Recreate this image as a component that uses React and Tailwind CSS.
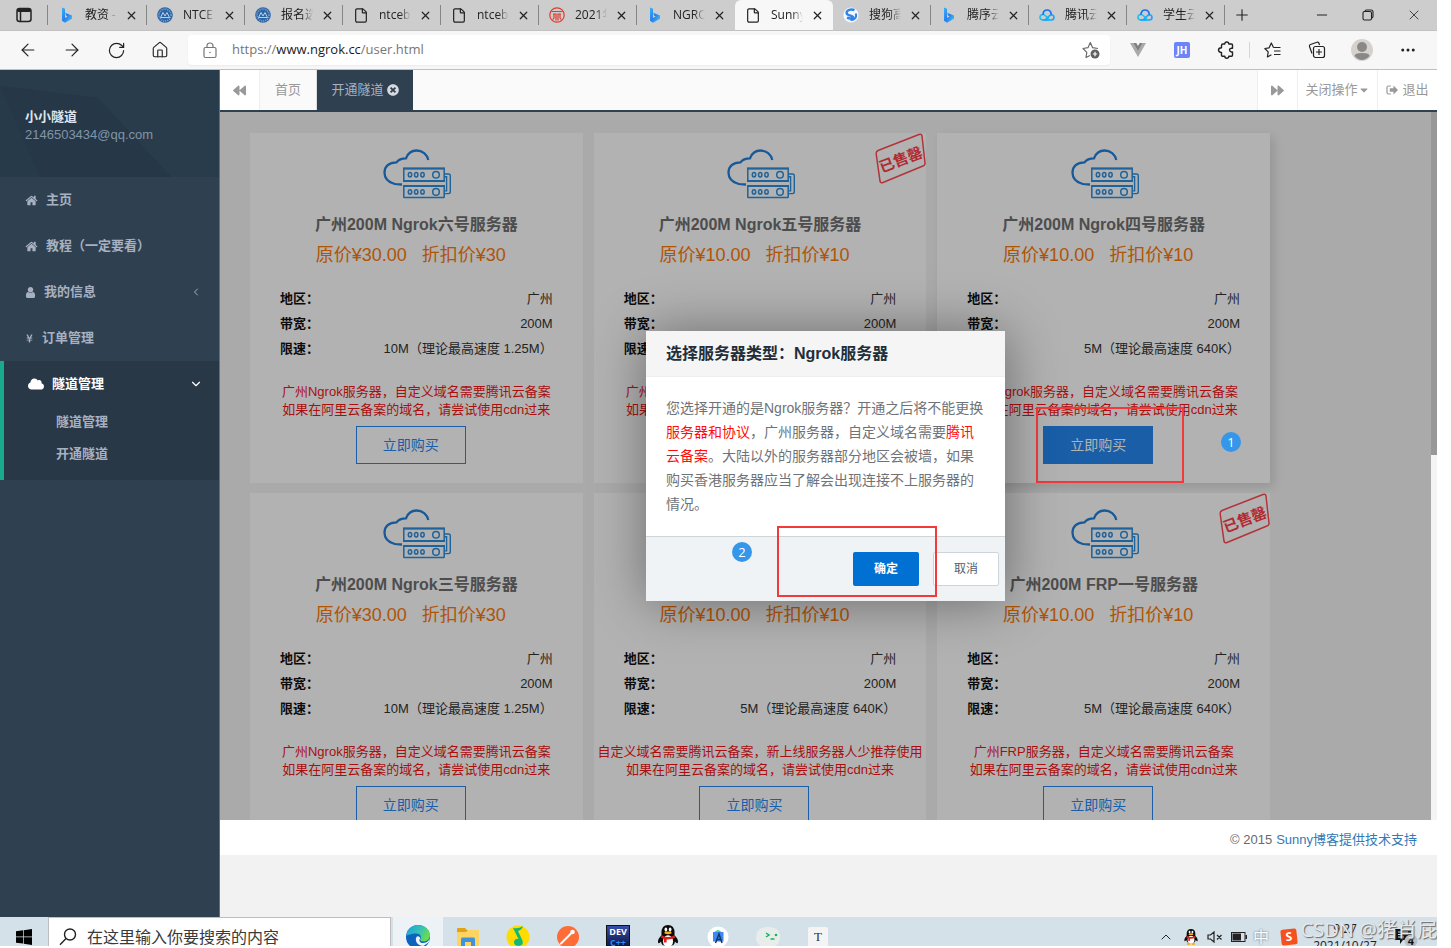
import { useState } from "react";
import clsx from "clsx";
import {
    ArrowLeft,
    ArrowRight,
    ChevronDown,
    ChevronLeft,
    ChevronUp,
    Ellipsis,
    File,
    House,
    Minus,
    Plus,
    RotateCw,
    X,
} from "lucide-react";
import {
    FaBackward,
    FaCaretDown,
    FaCloud,
    FaForward,
    FaTimesCircle,
    FaYenSign,
} from "react-icons/fa";

// -----------------------------
// DATA
// -----------------------------
const BROWSER_TABS = [
    { icon: "bing", title: "教资 - 国" },
    { icon: "ntce", title: "NTCE - 中" },
    { icon: "ntce", title: "报名选择" },
    { icon: "file", title: "ntcebm" },
    { icon: "file", title: "ntcebm" },
    { icon: "red", title: "2021年" },
    { icon: "bing", title: "NGROK" },
    { icon: "file", title: "Sunny-", active: true },
    { icon: "sogou", title: "搜狗高速" },
    { icon: "bing", title: "腾序云" },
    { icon: "tencent", title: "腾讯云" },
    { icon: "tencent", title: "学生云" },
];

const NGROK_NOTE = "广州Ngrok服务器，自定义域名需要腾讯云备案";

const SERVERS = [
    { id: 6, name: "广州200M Ngrok六号服务器", price: "30", speed: "10M（理论最高速度 1.25M）", note: NGROK_NOTE },
    { id: 5, name: "广州200M Ngrok五号服务器", price: "10", speed: "5M（理论最高速度 640K）", note: NGROK_NOTE, soldOut: true },
    { id: 4, name: "广州200M Ngrok四号服务器", price: "10", speed: "5M（理论最高速度 640K）", note: NGROK_NOTE, hot: true },
    { id: 3, name: "广州200M Ngrok三号服务器", price: "30", speed: "10M（理论最高速度 1.25M）", note: NGROK_NOTE },
    { id: 2, name: "广州200M Ngrok二号服务器", price: "10", speed: "5M（理论最高速度 640K）", note: "自定义域名需要腾讯云备案，新上线服务器人少推荐使用" },
    { id: 1, name: "广州200M FRP一号服务器", price: "10", speed: "5M（理论最高速度 640K）", note: "广州FRP服务器，自定义域名需要腾讯云备案", soldOut: true },
];

// -----------------------------
// ICONS
// -----------------------------
const BingIcon = () => (
    <svg viewBox="0 0 16 16" className="size-4">
        <defs>
            <linearGradient id="bing" x1="0" y1="0" x2="1" y2="1">
                <stop offset="0" stopColor="#35b5f5" />
                <stop offset="0.5" stopColor="#2a7df0" />
                <stop offset="1" stopColor="#3fd0f0" />
            </linearGradient>
        </defs>
        <path d="M3 .5l3 1.200v9.300l2.600-1.500-1.400-.7L6.200 5.800l6.800 2.600v3.400L6 15.800l-3-2z" fill="url(#bing)" />
    </svg>
);

const NtceIcon = () => (
    <svg viewBox="0 0 16 16" className="size-4">
        <circle cx="8" cy="8" r="7.8" fill="#2c64a4" />
        <circle cx="8" cy="8" r="6" fill="none" stroke="#7fa6d0" strokeWidth="1.600" strokeDasharray="1 1" />
        <path d="M3.500 10.500l2.500-5 2 3.500 2-3.500 2.500 5z" fill="#2c64a4" stroke="#b9d0e8" strokeWidth="1" />
    </svg>
);

const RedIcon = () => (
    <svg viewBox="0 0 16 16" className="size-4" fill="none" stroke="#e23b2e">
        <circle cx="8" cy="8" r="7.200" strokeWidth="1.200" />
        <path d="M2.500 4.500h11M4 7h3v6.500M12 7H9v6.500M5 7v3.500q0 1.500-1.500 2M11 7v3.500q0 1.500 1.500 2" strokeWidth="1.200" />
    </svg>
);

const SogouIcon = () => (
    <svg viewBox="0 0 16 16" className="size-4">
        <circle cx="8" cy="8" r="7.600" fill="#f3f8ff" />
        <path d="M11.500 3.200C8 1.500 3.600 3 3.600 6c0 3 6.600 2.200 6.600 4.300 0 1.500-3.400 1.700-6.200.3" fill="none" stroke="#2f83ea" strokeWidth="2.400" />
        <path d="M12.500 6.500c2 3-1 7-5 6.500" fill="none" stroke="#2f83ea" strokeWidth="2" />
    </svg>
);

const TencentIcon = () => (
    <svg viewBox="0 0 16 12" className="h-3 w-4" fill="none" strokeWidth="1.700" strokeLinecap="round" strokeLinejoin="round">
        <path d="M9 11H4C2 11 1 9.700 1 8.200 1 6.500 2.400 5.300 4.300 5.500 5.500 5.600 6.500 6.500 9.500 9.500" stroke="#19c3f0" />
        <path d="M4 11h8.200c1.700 0 2.800-1.300 2.800-2.700 0-2.300-2.500-3.200-4.300-1.800L6 11" stroke="#1fa5f5" />
        <path d="M4 5.200C4.200 2.800 6 1 8.200 1c2 0 3.600 1.400 4 3.900" stroke="#1671f2" />
    </svg>
);

const TabIcon = ({ name }) => {
    if (name === "bing") return <BingIcon />;
    if (name === "ntce") return <NtceIcon />;
    if (name === "red") return <RedIcon />;
    if (name === "sogou") return <SogouIcon />;
    if (name === "tencent") return <TencentIcon />;
    return <File className="size-[17px] text-[#222]" strokeWidth={1.8} />;
};

const HomeIcon = ({ className }) => (
    <svg viewBox="0 0 1792 1792" className={className} fill="currentColor">
        <path d="M1472 992v480q0 26-19 45t-45 19h-384v-384h-256v384h-384q-26 0-45-19t-19-45v-480q0-1 .5-3t.5-3l575-474 575 474q1 2 1 6zm223-69l-62 74q-8 9-21 11h-3q-13 0-21-7l-692-577-692 577q-12 8-24 7-13-2-21-11l-62-74q-8-10-7-23.500t11-21.500l719-599q32-26 76-26t76 26l244 204v-195q0-14 9-23t23-9h192q14 0 23 9t9 23v408l219 182q10 8 11 21.500t-7 23.500z" />
    </svg>
);

const UserIcon = ({ className }) => (
    <svg viewBox="128 128 1536 1536" className={className} fill="currentColor">
        <path d="M1536 1399q0 109-62.500 187t-150.500 78h-854q-88 0-150.500-78t-62.500-187q0-85 8.500-160.500t31.500-152 58.500-131 94-89 134.500-34.500q131 128 313 128t313-128q76 0 134.500 34.500t94 89 58.500 131 31.500 152 8.500 160.500zm-256-887q0 159-112.500 271.500t-271.500 112.500-271.500-112.500-112.500-271.500 112.500-271.500 271.500-112.500 271.500 112.500 112.500 271.500z" />
    </svg>
);

const ServerIcon = () => (
    <svg viewBox="0 0 70 50" className="h-[50px] w-[70px]" fill="none" stroke="#2e8fdf" strokeWidth="1.500">
        <path
            d="M19 35.500C15 35.500 13 35.500 10.500 34.500C4.500 32.500 1.500 28 1.500 23.500C1.500 17.500 6 13.300 13.500 13.300C15.500 10.500 19 9.300 23 9.300C25 4 29 1.500 33.500 1.500C39.500 1.500 44 5.500 45.300 11"
            stroke="#2380dd"
            strokeWidth="2.300"
        />
        <rect x="20.800" y="19.500" width="40.400" height="12.500" />
        <path d="M20 19.500h42M20 32h42" strokeWidth="2" />
        <rect x="20.800" y="37" width="40.400" height="11.500" rx="0.500" />
        <path d="M20 37h42" strokeWidth="2" />
        {[25.700, 42.900].map((cy) => (
            <g key={cy}>
                <ellipse cx="27" cy={cy} rx="1.700" ry="2.200" />
                <ellipse cx="33.200" cy={cy} rx="1.700" ry="2.200" />
                <ellipse cx="39.500" cy={cy} rx="1.700" ry="2.200" />
                <circle cx="53" cy={cy} r="3.300" />
            </g>
        ))}
        <path d="M61 25h4.500q1.800 0 1.800 1.800v16q0 1.800-1.800 1.800H61M61 27.700h2.600v14.200H61" strokeWidth="1.400" />
    </svg>
);

const SoldOutStamp = () => (
    <svg viewBox="0 0 51 51" className="absolute top-0 right-0 size-[51px]" role="img" aria-label="已售罄">
        <path
            d="M3 17.500L44 1.500q2.500-1 3 1.500L50 30q.3 2-1.500 2.800L8 49.500q-2.500.8-3-1.500L1.200 21q-.3-2.500 1.800-3.500z"
            fill="none"
            stroke="#ff4a52"
            strokeWidth="1.500"
        />
        <text
            x="25.500"
            y="32"
            textAnchor="middle"
            transform="rotate(-21 25.5 26)"
            fill="#ff3d47"
            className="font-['Noto_Sans_CJK_SC',sans-serif] text-[15px] font-bold"
        >
            已售罄
        </text>
    </svg>
);

const SignOutIcon = () => (
    <svg viewBox="0 0 12 10" className="h-[10px] w-3" fill="none">
        <path d="M4.500 1H2.500Q1 1 1 2.500v5Q1 9 2.500 9h2" stroke="currentColor" strokeWidth="1.200" strokeLinecap="round" />
        <path d="M7.500 .5L12 5 7.500 9.500V6.800H3.800V3.200h3.700z" fill="currentColor" />
    </svg>
);

const LockIcon = () => (
    <svg viewBox="0 0 14 17" className="h-[17px] w-[14px]" fill="none" stroke="#777" strokeWidth="1.200">
        <rect x="1" y="5.500" width="12" height="10" rx="1.500" />
        <path d="M4 5.500V4q0-3 3-3t3 3v1.500" />
        <circle cx="7" cy="10.500" r="0.800" fill="#777" stroke="none" />
    </svg>
);

const PuzzleIcon = () => (
    <svg viewBox="0 0 18 18" className="size-[18px]" fill="none" stroke="#222" strokeWidth="1.400" strokeLinejoin="round">
        <path d="M6 3h1.800q0-2 2-2t2 2H14.500q1 0 1 1v3.200h-1q-2 .2-2 1.900t2 1.900h1v3.200q0 1-1 1h-2.700q0 2-2 2t-2-2H5.500q-1 0-1-1V11.500q-3 0-3-2.400t3-2.400V4.500Q4.500 3 6 3z" />
    </svg>
);

const VueIcon = () => (
    <svg viewBox="0 0 16 14" className="h-[14px] w-4">
        <path d="M0 0h3.300L8 8.300 12.700 0H16L8 14z" fill="#a9a9a9" />
        <path d="M3.300 0h3L8 3l1.700-3h3L8 8.300z" fill="#7f7f7f" />
    </svg>
);

const FavoriteAddIcon = () => (
    <svg viewBox="0 0 18 18" className="size-[18px]" fill="none" stroke="#6b6b6b" strokeWidth="1.200" strokeLinejoin="round">
        <path d="M8 14.500l-4 2 .8-5.200L1 7.500l5-.8L8.300 1.500l2.300 5.200 5.400.8" />
        <circle cx="13" cy="13" r="4.500" fill="#5f5f5f" stroke="none" />
        <path d="M13 10.800v4.400M10.800 13h4.400" stroke="#fff" />
    </svg>
);

const FavoritesIcon = () => (
    <svg viewBox="0 0 18 18" className="size-[18px]" fill="none" stroke="#222" strokeWidth="1.200" strokeLinejoin="round">
        <path d="M9.500 6.500L7.300 2 5.100 6.800.8 7.500l3.400 3.400L3.400 16l4-2.200M9.500 6.500h7M10 10h6.500M10 13.500h6.500" />
    </svg>
);

const CollectionsIcon = () => (
    <svg viewBox="0 0 18 18" className="size-[18px]" fill="none" stroke="#222" strokeWidth="1.200">
        <path d="M4 12.500L1.500 5.500Q1 4 2.500 3.500L9 1.300q1.500-.5 2 1L11.500 4" />
        <rect x="5.500" y="5.500" width="11" height="11" rx="2" />
        <path d="M11 8v6M8 11h6" />
    </svg>
);

const WindowsIcon = () => (
    <svg viewBox="0 0 16 16" className="size-4" fill="#000">
        <path d="M0 2.300L7 1.300V7.600H0zM7.700 1.200L16 0v7.600H7.700zM0 8.300h7v6.300L0 13.700zM7.700 8.300H16V16l-8.300-1.200z" />
    </svg>
);

const SearchIcon = () => (
    <svg viewBox="0 0 18 18" className="size-[18px]" fill="none" stroke="#222" strokeWidth="1.400">
        <circle cx="11" cy="6.500" r="5.500" />
        <path d="M7 10.500L1 16.800" />
    </svg>
);

const EdgeIcon = () => (
    <svg viewBox="0 0 24 24" className="size-6">
        <defs>
            <linearGradient id="edge" x1="0" y1="0" x2="1" y2="0.400">
                <stop offset="0" stopColor="#1a9fdb" />
                <stop offset="0.600" stopColor="#35c1b8" />
                <stop offset="1" stopColor="#66dc50" />
            </linearGradient>
        </defs>
        <circle cx="12" cy="12" r="12" fill="#0d62bd" />
        <path d="M.2 11C1 4.500 6 0 12 0c7 0 12 5 12 10 0 4-3 6.500-6.500 6.500-3 0-4-1.500-3-3 1.200-2-.5-5-4-5C6 8.500 1.500 10 .2 11z" fill="url(#edge)" />
        <path d="M10.500 12c-2 3 .5 9 7 9l5-3.500L24 14l-3 3c-5 2.500-9 0-7-3.500.8-1.500-2.500-3.500-3.500-1.500z" fill="#edf2f6" />
    </svg>
);

const FolderIcon = () => (
    <svg viewBox="0 0 22 20" className="h-5 w-[22px]">
        <path d="M0 2q0-1 1-1h7l2 2h11q1 0 1 1v15H0z" fill="#e0a316" />
        <path d="M0 5h9l2-2h11v16H0z" fill="#fdd462" />
        <path d="M4 19v-7q0-1.500 1.500-1.500h11q1.500 0 1.500 1.500v7h-4v-4H8v4z" fill="#3f93dc" />
    </svg>
);

const MusicIcon = () => (
    <svg viewBox="0 0 24 24" className="size-6">
        <circle cx="12" cy="12" r="11.500" fill="#ffdc00" />
        <path d="M7 3q6 1 10-2-1 4-5 5l4.500 9.500q1.500 5-4 5.500-5-.5-4.500-4.500 1-3.500 4.500-2.500z" fill="#12b877" />
    </svg>
);

const PostmanIcon = () => (
    <svg viewBox="0 0 24 24" className="size-6">
        <circle cx="12" cy="12" r="11" fill="#ff6c37" />
        <path d="M5 18.500l6-6M10 13.500l5-5" stroke="#fff" strokeWidth="2" strokeLinecap="round" />
        <circle cx="16.500" cy="7" r="2.300" fill="#fff" />
    </svg>
);

const QqIcon = ({ className }) => (
    <svg viewBox="0 0 22 26" className={className}>
        <path d="M4 11Q3 0 11 0t7 11q5 5 3.500 8.500-1 1-3-1.500 0 5-7.500 5t-7.500-5q-2 2.500-3 1.500Q-1 16 4 11z" fill="#0b0b0b" />
        <ellipse cx="11" cy="17.500" rx="5.500" ry="6.500" fill="#fff" />
        <ellipse cx="8.700" cy="5" rx="1.500" ry="2.200" fill="#fff" />
        <ellipse cx="13.300" cy="5" rx="1.500" ry="2.200" fill="#fff" />
        <ellipse cx="11" cy="8.500" rx="4" ry="1.400" fill="#f9b016" />
        <path d="M4 11q7 4 14 0l.8 2.800Q14 16 9.500 15.700V19H6.500v-4l-3-1.200z" fill="#e51c1c" />
        <path d="M4 24q3-3 6.500 0 0 2-3.500 2t-3-2zM11.500 24q3.500-3 6.500 0 0 2-3 2t-3.500-2z" fill="#f9b016" />
    </svg>
);

const AndroidStudioIcon = () => (
    <svg viewBox="0 0 22 22" className="size-[22px]">
        <circle cx="11" cy="11" r="10.500" fill="#fff" />
        <path d="M7 6.500q4-5 8 0z" fill="#3ddc84" />
        <rect x="6" y="6" width="10.500" height="9.500" fill="#4086f5" />
        <path d="M8.500 17L12 8l3 9M10 13.500h4" fill="none" stroke="#12395f" strokeWidth="1.500" />
    </svg>
);

const TerminalIcon = () => (
    <svg viewBox="0 0 26 22" className="h-[22px] w-[26px]">
        <path d="M1 12Q1 1 13 1t12 10q0 10-12 10Q1 21 1 12z" fill="#e8eceb" />
        <path d="M11 7l3 2-3 2M15.500 13h4" fill="none" stroke="#17b45f" strokeWidth="1.500" />
        <circle cx="21" cy="9" r="1.300" fill="#17b45f" />
    </svg>
);

const VolumeMutedIcon = () => (
    <svg viewBox="0 0 16 12" className="h-3 w-4" fill="none" stroke="#222" strokeWidth="1.200">
        <path d="M1 4h2.500L7 1v10L3.500 8H1zM10 4l4.500 4.500M14.500 4L10 8.500" />
    </svg>
);

const BatteryIcon = () => (
    <svg viewBox="0 0 16 10" className="h-[10px] w-4">
        <rect x="0.500" y="0.500" width="13.500" height="9" fill="none" stroke="#222" />
        <rect x="1.500" y="1.500" width="8.500" height="7" fill="#222" />
        <path d="M14.500 3H16v4h-1.500z" fill="#222" />
    </svg>
);

const NoticeIcon = () => (
    <svg viewBox="0 0 24 18" className="h-[18px] w-6">
        <path d="M0 1h16v11H8l-3 4v-4H0z" fill="#111" />
        <path d="M3 4h10M3 6.500h10M3 9h6" stroke="#d5e1e8" />
        <circle cx="16" cy="13" r="6.500" fill="#b9bfc3" />
    </svg>
);

// -----------------------------
// BROWSER CHROME
// -----------------------------
const BrowserTab = ({ tab, divided }) => (
    <div
        className={clsx(
            "flex h-full w-[98px] shrink-0 items-center pl-[10px]",
            tab.active && "rounded-t-md bg-[#f7f7f7]"
        )}
    >
        <span className="flex w-4 justify-center">
            <TabIcon name={tab.icon} />
        </span>
        <span className="ml-[10px] w-8 overflow-hidden text-xs whitespace-nowrap text-[#222] [mask-image:linear-gradient(to_right,black_65%,transparent)]">
            {tab.title}
        </span>
        <button aria-label="关闭标签页" className="ml-[6px] flex w-4 justify-center">
            <X className="size-[13px] text-[#222]" strokeWidth={2.2} />
        </button>
        {divided && <span className="ml-auto h-5 w-px bg-[#858585]" />}
    </div>
);

const TabStrip = () => (
    <div className="flex h-[31px] shrink-0 items-center border-b border-[#c2c2c2] bg-[#cdcdcd]">
        <div className="flex h-full w-12 shrink-0 items-center">
            <svg viewBox="0 0 16 16" className="ml-4 size-4" fill="none" stroke="#222" strokeWidth="1.500">
                <rect x="1" y="1.500" width="14" height="13" rx="2.500" />
                <path d="M1.500 3.500h13" strokeWidth="3" />
                <path d="M4.500 5v9" />
            </svg>
            <span className="ml-auto h-5 w-px bg-[#858585]" />
        </div>
        <div className="ml-px flex h-full items-center">
            {BROWSER_TABS.map((tab, i) => (
                <BrowserTab key={i} tab={tab} divided={!tab.active && !BROWSER_TABS[i + 1]?.active} />
            ))}
        </div>
        <button aria-label="新建标签页" className="ml-2">
            <Plus className="size-[18px] text-[#222]" strokeWidth={1.5} />
        </button>
        <div className="ml-auto flex items-center text-[#222]">
            <button aria-label="最小化" className="flex w-[46px] justify-center">
                <Minus className="size-4" strokeWidth={1.5} />
            </button>
            <button aria-label="还原" className="flex w-[46px] justify-center">
                <svg viewBox="0 0 12 12" className="size-3" fill="none" stroke="#222" strokeWidth="1.100">
                    <rect x="1" y="2.500" width="8.500" height="8.500" rx="1.500" />
                    <path d="M3 2.500Q3 1 4.500 1h4.500q2 0 2 2v4.500q0 1.500-1.500 1.500" />
                </svg>
            </button>
            <button aria-label="关闭" className="flex w-[46px] justify-center">
                <X className="size-4" strokeWidth={1.2} />
            </button>
        </div>
    </div>
);

const Toolbar = () => (
    <div className="flex h-[39px] shrink-0 items-center border-b border-[#bfbfbf] bg-[#f7f7f7] px-[6px] text-[#222]">
        <button aria-label="后退" className="flex w-11 justify-center">
            <ArrowLeft className="size-5" strokeWidth={1.4} />
        </button>
        <button aria-label="前进" className="flex w-11 justify-center">
            <ArrowRight className="size-5" strokeWidth={1.4} />
        </button>
        <button aria-label="刷新" className="flex w-11 justify-center">
            <RotateCw className="size-[19px]" strokeWidth={1.5} />
        </button>
        <button aria-label="主页" className="flex w-11 justify-center">
            <House className="size-[18px]" strokeWidth={1.5} />
        </button>
        <div className="mx-[6px] flex h-[30px] flex-1 items-center rounded bg-white px-[10px] shadow-xs">
            <span className="flex w-6 justify-center">
                <LockIcon />
            </span>
            <a href="https://www.ngrok.cc/user.html" className="ml-[10px] flex-1 text-[13px] text-[#767676]">
                https://<span className="text-[#1b1b1b]">www.ngrok.cc</span>/user.html
            </a>
            <button aria-label="添加到收藏夹">
                <FavoriteAddIcon />
            </button>
        </div>
        <button aria-label="Vue" className="flex w-11 justify-center">
            <VueIcon />
        </button>
        <button aria-label="JSON-handle" className="flex w-11 justify-center">
            <span className="flex size-4 items-center justify-center rounded-xs bg-[#6b84f8] text-[10px] leading-none font-bold text-white">JH</span>
        </button>
        <button aria-label="扩展" className="flex w-11 justify-center">
            <PuzzleIcon />
        </button>
        <span className="mx-px h-4 w-px bg-[#d5d5d5]" />
        <button aria-label="收藏夹" className="flex w-11 justify-center">
            <FavoritesIcon />
        </button>
        <button aria-label="集锦" className="flex w-11 justify-center">
            <CollectionsIcon />
        </button>
        <button aria-label="个人资料" className="flex w-[46px] justify-center">
            <svg viewBox="0 0 22 22" className="size-[22px]">
                <circle cx="11" cy="11" r="11" fill="#d5d2ce" />
                <circle cx="11" cy="8" r="5" fill="#8a8886" />
                <path d="M3.500 17q0-3 7.500-3t7.500 3Q15 21 11 21t-7.500-4z" fill="#8a8886" />
            </svg>
        </button>
        <button aria-label="设置及其他" className="flex w-[46px] justify-center">
            <Ellipsis className="size-[18px]" />
        </button>
    </div>
);

// -----------------------------
// SIDEBAR
// -----------------------------
const NavItem = ({ icon, label, arrow }) => (
    <a href="#" className="flex h-[46px] items-center px-[25px] text-[13px] font-bold text-[#a7b1c2]">
        {icon}
        <span>{label}</span>
        {arrow}
    </a>
);

const Sidebar = () => (
    <aside className="w-[220px] shrink-0 border-r border-[#5f6f7d] bg-[#2f4050]">
        <div className="relative h-[107px] overflow-hidden bg-[#273a49]">
            <svg viewBox="0 0 219 107" preserveAspectRatio="none" className="absolute inset-0 size-full">
                <path d="M0 0h120L98 28 0 16z" fill="#293c4b" />
                <path d="M98 28L120 0h99v107h-48z" fill="#293c4b" />
                <path d="M98 28l73 79H40L0 16z" fill="#263847" />
            </svg>
            <div className="relative px-[25px] pt-[38px] text-[13px] leading-[18px]">
                <p className="font-bold text-[#dfe4ed]">小小隧道</p>
                <p className="text-[#8095a8]">2146503434@qq.com</p>
            </div>
        </div>
        <nav>
            <NavItem icon={<HomeIcon className="mr-2 size-[13px]" />} label="主页" />
            <NavItem icon={<HomeIcon className="mr-2 size-[13px]" />} label="教程（一定要看）" />
            <NavItem
                icon={<UserIcon className="mr-2 size-[11px]" />}
                label="我的信息"
                arrow={<ChevronLeft className="-mr-2 ml-auto size-3" />}
            />
            <NavItem icon={<FaYenSign className="mr-2 size-[9px]" />} label="订单管理" />
            <div className="border-l-4 border-[#19aa8d] bg-[#293846] pb-[10px]">
                <a href="#" className="flex h-[45px] items-center px-6 text-[13px] font-bold text-white">
                    <FaCloud className="mr-2 size-4" />
                    <span>隧道管理</span>
                    <ChevronDown className="-mr-2 ml-auto size-[14px]" />
                </a>
                <a href="#" className="flex h-8 items-center pl-[52px] text-[13px] font-bold text-[#a7b1c2]">隧道管理</a>
                <a href="#" className="flex h-8 items-center pl-[52px] text-[13px] font-bold text-[#a7b1c2]">开通隧道</a>
            </div>
        </nav>
    </aside>
);

// -----------------------------
// CONTENT
// -----------------------------
const ContentTabs = () => (
    <div className="flex h-[42px] shrink-0 items-stretch border-b-2 border-[#2f4050] bg-[#fafafa] text-[13px] text-[#999]">
        <button aria-label="向左滚动" className="flex w-10 items-center justify-center border-r border-[#eee] bg-white">
            <FaBackward className="size-[13px]" />
        </button>
        <a href="#" className="flex w-[57px] items-center justify-center border-r border-[#ddd]">首页</a>
        <a href="#" className="flex w-24 items-center justify-center gap-[3px] bg-[#2f4050] text-[#a7b1c2]">
            开通隧道
            <FaTimesCircle className="size-3 text-[#d5dae0]" />
        </a>
        <button aria-label="向右滚动" className="ml-auto flex w-10 items-center justify-center border-l border-[#eee] bg-white">
            <FaForward className="size-[13px]" />
        </button>
        <button className="flex w-20 items-center justify-center border-l border-[#eee] bg-white">
            关闭操作
            <FaCaretDown className="size-3" />
        </button>
        <a href="#" className="flex w-[60px] items-center justify-center gap-1 border-l border-[#eee] bg-white">
            <SignOutIcon />
            退出
        </a>
    </div>
);

const SpecRow = ({ label, value }) => (
    <div className="flex h-[25px] items-center justify-between text-[13px] text-[#333]">
        <dt className="font-bold text-[#111]">{label}：</dt>
        <dd>{value}</dd>
    </div>
);

const ServerCard = ({ server, onBuy }) => (
    <div
        className={clsx(
            "relative h-[350px] bg-white pt-4 text-center",
            server.hot && "shadow-[4px_4px_10px_rgba(0,0,0,0.12)]"
        )}
    >
        {server.soldOut && <SoldOutStamp />}
        <div className="flex justify-center pl-1">
            <ServerIcon />
        </div>
        <h3 className="mt-[14px] text-base leading-6 font-bold text-[#6f6f6f]">{server.name}</h3>
        <p className="mt-1 pr-[11px] text-lg leading-7 whitespace-pre text-[#fb7a0a]">
            {`原价¥${server.price}.00   折扣价¥${server.price}`}
        </p>
        <dl className="mt-[17px] px-[30px]">
            <SpecRow label="地区" value="广州" />
            <SpecRow label="带宽" value="200M" />
            <SpecRow label="限速" value={server.speed} />
        </dl>
        <p className="mt-[22px] text-[13px] leading-[18px] whitespace-nowrap text-[#f21616]">
            {server.note}
            <br />
            如果在阿里云备案的域名，请尝试使用cdn过来
        </p>
        <div className="mt-[7px] pr-[11px]">
            <button
                onClick={onBuy}
                className={clsx(
                    "h-[38px] w-[110px] border border-[#2587f0] text-sm",
                    server.hot ? "bg-[#2587f0] text-white" : "text-[#2587f0]"
                )}
            >
                立即购买
            </button>
        </div>
    </div>
);

const StepBadge = ({ n, className }) => (
    <span
        className={clsx(
            "absolute flex size-5 items-center justify-center rounded-full bg-[#3596ea] font-['Open_Sans',sans-serif] text-[13px] leading-none text-white",
            className
        )}
    >
        {n}
    </span>
);

const ConfirmDialog = ({ onClose }) => (
    <div
        role="dialog"
        aria-labelledby="dialog-title"
        className="relative w-[359px] bg-white shadow-[1px_1px_50px_rgba(0,0,0,0.4)]"
    >
        <h2 id="dialog-title" className="h-[46px] border-b border-[#eee] bg-[#f5f5f5] px-5 text-base leading-[46px] font-bold text-[#232e38]">
            选择服务器类型：Ngrok服务器
        </h2>
        <p className="px-5 pt-[19px] pb-5 text-sm leading-6 text-[#6f7377]">
            您选择开通的是Ngrok服务器？开通之后将不能更换
            <span className="text-[#ff0d0d]">服务器和协议</span>
            ，广州服务器，自定义域名需要
            <span className="text-[#ff0d0d]">腾讯云备案</span>
            。大陆以外的服务器部分地区会被墙，如果购买香港服务器应当了解会出现连接不上服务器的情况。
        </p>
        <div className="flex justify-end gap-[14px] border-t border-[#cfd4d6] bg-[#eff3f6] pt-[15px] pr-[6px] pb-[15px] text-xs">
            <button onClick={onClose} className="h-[34px] w-[66px] rounded-xs bg-[#0070d2] font-bold text-white">
                确定
            </button>
            <button onClick={onClose} className="h-[34px] w-[66px] rounded-xs border border-[#ced4dc] bg-white text-[#54606c]">
                取消
            </button>
        </div>
        <span className="absolute top-[195px] left-[131px] h-[71px] w-[160px] border-2 border-[#f23a3a]" />
        <StepBadge n={2} className="top-[211px] left-[86px]" />
    </div>
);

const ServerList = () => {
    const [open, setOpen] = useState(true);

    return (
        <div className="flex min-h-0 flex-1 bg-[#f4f4f4]">
            <div className="relative min-w-0 flex-1 overflow-hidden bg-[#f4f4f4] pt-[21px] pl-[30px]">
                <div className="grid max-w-[1020px] grid-cols-3 gap-x-[11px] gap-y-[10px]">
                    {SERVERS.map((s) => (
                        <ServerCard key={s.id} server={s} onBuy={() => setOpen(true)} />
                    ))}
                </div>
                {open && (
                    <div className="absolute inset-0 flex items-center justify-center bg-black/30">
                        <span className="absolute top-[295px] left-[816px] h-[76px] w-[148px] border-2 border-[#f23a3a]" />
                        <StepBadge n={1} className="top-80 left-[1001px]" />
                        <ConfirmDialog onClose={() => setOpen(false)} />
                    </div>
                )}
            </div>
            <div className="w-[6px] shrink-0">
                <div className="h-[343px] bg-[#989898]" />
            </div>
        </div>
    );
};

// -----------------------------
// TASKBAR
// -----------------------------
const TaskbarApp = ({ label, active, children }) => (
    <button
        aria-label={label}
        className={clsx("flex h-full w-[50px] items-center justify-center", active && "bg-[#edf2f6]")}
    >
        {children}
    </button>
);

const Taskbar = () => (
    <footer className="relative h-[29px] shrink-0 overflow-hidden bg-[#d5e1e8] font-['Open_Sans','Noto_Sans_CJK_SC',sans-serif]">
        <div className="flex h-10 items-center">
            <button aria-label="开始" className="flex w-12 shrink-0 justify-center">
                <WindowsIcon />
            </button>
            <label className="flex h-full w-[343px] shrink-0 items-center border border-[#bdbdbd] bg-white pl-[10px]">
                <SearchIcon />
                <input
                    aria-label="搜索"
                    placeholder="在这里输入你要搜索的内容"
                    className="ml-[10px] w-[280px] text-base outline-none placeholder:text-[#3a3a3a]"
                />
            </label>
            <div className="ml-[2px] flex h-full">
                <TaskbarApp label="Edge" active><EdgeIcon /></TaskbarApp>
                <TaskbarApp label="文件资源管理器"><FolderIcon /></TaskbarApp>
                <TaskbarApp label="QQ音乐"><MusicIcon /></TaskbarApp>
                <TaskbarApp label="Postman"><PostmanIcon /></TaskbarApp>
                <TaskbarApp label="Dev-C++">
                    <span className="flex size-6 flex-col items-center border border-[#111] bg-linear-to-b from-[#3a4ea8] to-[#0c1240] text-[9px] leading-[11px] font-bold text-white">
                        DEV
                        <span className="text-[#2d8df0]">C++</span>
                    </span>
                </TaskbarApp>
                <TaskbarApp label="QQ"><QqIcon className="h-6 w-[22px]" /></TaskbarApp>
                <TaskbarApp label="Android Studio"><AndroidStudioIcon /></TaskbarApp>
                <TaskbarApp label="FinalShell"><TerminalIcon /></TaskbarApp>
                <TaskbarApp label="Typora">
                    <span className="flex size-5 items-center justify-center rounded-xs bg-[#f4f4f4] font-['Liberation_Serif',serif] text-[13px] text-[#333]">T</span>
                </TaskbarApp>
            </div>
            <div className="ml-auto flex h-full items-center text-[#222]">
                <ChevronUp className="size-4" strokeWidth={1.5} />
                <QqIcon className="ml-[10px] h-4 w-[14px]" />
                <span className="ml-[9px]"><VolumeMutedIcon /></span>
                <span className="ml-2"><BatteryIcon /></span>
                <span className="ml-[6px] text-base text-white [text-shadow:0_0_2px_#555]">中</span>
                <span className="ml-3 flex size-4 -rotate-6 items-center justify-center rounded-xs bg-[#f4511e] text-xs font-bold text-white">S</span>
                <div className="ml-3 w-[72px] text-center text-xs leading-[17px]">
                    <p>9:27</p>
                    <p>2021/10/27</p>
                </div>
                <span className="relative mr-[18px] ml-[14px]">
                    <NoticeIcon />
                    <span className="absolute right-0 bottom-0 w-4 text-center text-[11px] leading-[10px] font-bold text-[#111]">4</span>
                </span>
            </div>
        </div>
        <span className="absolute top-0 right-0 text-[20px] leading-[26px] whitespace-nowrap text-[#e4e9ec] [text-shadow:1px_1px_1px_#666]">
            CSDN @猪肖屁
        </span>
    </footer>
);

const App = () => {
    return (
        <div className="flex h-screen flex-col overflow-hidden bg-white pr-[14px] pb-[2px] font-['Liberation_Sans','Noto_Sans_CJK_SC',sans-serif]">
            <header className="shrink-0 font-['Open_Sans','Noto_Sans_CJK_SC',sans-serif]">
                <TabStrip />
                <Toolbar />
            </header>

            <div className="flex min-h-0 flex-1">
                <Sidebar />
                <main className="flex min-w-0 flex-1 flex-col bg-[#f2f2f2]">
                    <ContentTabs />
                    <ServerList />
                    <div className="mb-[62px] flex h-[35px] shrink-0 items-center justify-end gap-1 bg-white pt-1 pr-5 text-[13px] text-[#676a6c]">
                        <span>© 2015</span>
                        <a href="#" className="text-[#337ab7]">Sunny博客提供技术支持</a>
                    </div>
                </main>
            </div>

            <Taskbar />
        </div>
    );
};

export default App;
